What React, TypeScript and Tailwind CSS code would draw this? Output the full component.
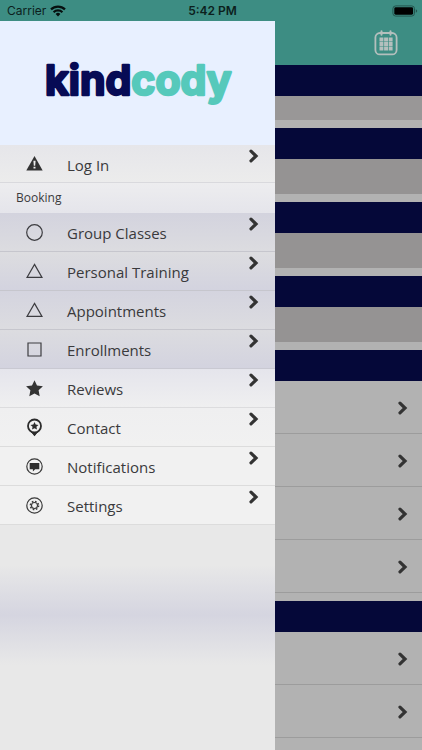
import type { ReactNode } from 'react';

interface MenuItem {
  label: string;
  icon: ReactNode;
  background: string;
}

const accountItems: MenuItem[] = [
  { label: 'Log In', icon: <WarningIcon />, background: 'bg-linear-to-b from-[#e6e6ea] to-[#ececec] h-[38px] border-[#d9d9dd]' },
];

const bookingItems: MenuItem[] = [
  { label: 'Group Classes', icon: <CircleIcon />, background: 'bg-linear-to-b from-[#d3d3de] to-[#dcdce0] h-[39px] border-[#c6c6cd]' },
  { label: 'Personal Training', icon: <TriangleIcon />, background: 'bg-linear-to-b from-[#dddde0] to-[#d3d3df] h-[39px] border-[#c6c6cd]' },
  { label: 'Appointments', icon: <TriangleIcon />, background: 'bg-linear-to-b from-[#d4d4df] to-[#dcdce0] h-[39px] border-[#c6c6cd]' },
  { label: 'Enrollments', icon: <SquareIcon />, background: 'bg-linear-to-b from-[#dcdce0] to-[#d3d3df] h-[39px] border-[#c9c9d2]' },
  { label: 'Reviews', icon: <StarIcon />, background: 'bg-linear-to-b from-[#e5e5ec] to-[#efeff0] h-[39px] border-[#dcdcde]' },
  { label: 'Contact', icon: <PinIcon />, background: 'bg-linear-to-b from-[#efeff0] to-[#f1f1f1] h-[39px] border-[#dcdcdc]' },
  { label: 'Notifications', icon: <MessageIcon />, background: 'bg-[#f1f1f1] h-[39px] border-[#dcdcdc]' },
  { label: 'Settings', icon: <GearIcon />, background: 'bg-[#f1f1f1] h-[39px] border-[#dcdcdc]' },
];

function WarningIcon() {
  return (
    <svg viewBox="0 0 17 17" className="size-[17px]">
      <path d="M8.5 1 16.7 15.5H.3Z" fill="#333" />
      <path d="M7.4 5.8h2.2l-.4 5H7.8zM7.5 11.8h2v1.8h-2z" fill="#eee" />
    </svg>
  );
}

function CircleIcon() {
  return (
    <svg viewBox="0 0 17 17" className="size-[17px]">
      <circle cx="8.5" cy="8.5" r="7.8" fill="none" stroke="#3c3c40" strokeWidth="1.2" />
    </svg>
  );
}

function TriangleIcon() {
  return (
    <svg viewBox="0 0 17 17" className="size-[17px]">
      <path d="M8.5 1.4 16 14.4H1Z" fill="none" stroke="#3c3c40" strokeWidth="1.2" />
    </svg>
  );
}

function SquareIcon() {
  return (
    <svg viewBox="0 0 17 17" className="size-[17px]">
      <path d="M2 2h13v13H2z" fill="none" stroke="#3c3c40" strokeWidth="1.2" />
    </svg>
  );
}

function StarIcon() {
  return (
    <svg viewBox="0 0 17 17" className="size-[17px]">
      <path d="m8.5.2 2.5 5.4 5.9.7-4.3 4 1.1 6-5.2-2.9-5.2 2.9 1.1-6-4.3-4 5.9-.7z" fill="#333" />
    </svg>
  );
}

function PinIcon() {
  return (
    <svg viewBox="0 0 17 19" className="h-[19px] w-[17px]">
      <path d="M8.5 18.2 5.3 14h6.4z" fill="#2c2c2c" />
      <circle cx="8.5" cy="8" r="6.5" fill="#f1f1f1" stroke="#2c2c2c" strokeWidth="1.8" />
      <path d="M4.4 13.2q4.1 2.4 8.2 0L8.5 18z" fill="#2c2c2c" />
      <path d="m8.5 4 1.2 2.6 2.8.3-2.1 1.9.6 2.8-2.5-1.4L6 11.6l.6-2.8-2.1-1.9 2.8-.3z" fill="#2c2c2c" />
    </svg>
  );
}

function MessageIcon() {
  return (
    <svg viewBox="0 0 17 17" className="size-[17px]">
      <circle cx="8.5" cy="8.5" r="7.7" fill="none" stroke="#3a3a3a" strokeWidth="1.2" />
      <path d="M3.7 4.9h9.6v6.3H9.2l-2.3 2.2v-2.2H3.7z" fill="#2c2c2c" />
    </svg>
  );
}

function GearIcon() {
  return (
    <svg viewBox="0 0 17 17" className="size-[17px]" fill="none" stroke="#3a3a3a">
      <circle cx="8.5" cy="8.5" r="7.7" strokeWidth="1.2" />
      <circle cx="8.5" cy="8.5" r="3" strokeWidth="1.1" />
      <circle cx="8.5" cy="8.5" r="4.1" strokeWidth="1.5" strokeDasharray="1.6 1.62" />
    </svg>
  );
}

function Chevron() {
  return (
    <svg viewBox="0 0 10 14" className="h-[14px] w-[10px]">
      <path d="m2 2.2 5 4.8-5 4.8" fill="none" stroke="#333" strokeWidth="3.2" strokeLinecap="round" />
    </svg>
  );
}

function StatusBar() {
  return (
    <header className="grid h-[21px] shrink-0 grid-cols-3 items-center bg-[#3d8d83] pr-1 pl-[7px] text-[#0c1f1d]">
      <div className="flex items-center gap-1">
        <span className="text-[12px] leading-4">Carrier</span>
        <svg viewBox="0 0 16 12" className="h-3 w-4">
          <g fill="none" stroke="#06100f" strokeWidth="2.2">
            <path d="M1 4.4a10 10 0 0 1 14 0" />
            <path d="M3.6 7.2a6.3 6.3 0 0 1 8.8 0" />
          </g>
          <path d="M8 11.4 5.6 9a3.4 3.4 0 0 1 4.8 0z" fill="#06100f" />
        </svg>
      </div>
      <span className="text-center text-[12px] leading-4 font-semibold">5:42 PM</span>
      <svg viewBox="0 0 26 12" className="h-3 w-[26px] justify-self-end">
        <rect x=".9" y=".9" width="21.6" height="10.2" rx="2.8" fill="none" stroke="#24564f" />
        <rect x="2.3" y="2.3" width="18.8" height="7.4" rx="1.4" fill="#000" />
        <path d="M23.8 4.2q1.4.6 1.4 1.8t-1.4 1.8z" fill="#24564f" />
      </svg>
    </header>
  );
}

function MenuRow({ item }: { item: MenuItem }) {
  return (
    <li className={`border-b ${item.background}`}>
      <a href="#" className="flex h-full items-center pr-4 pl-[26px]">
        <span className="flex w-[17px] justify-center">{item.icon}</span>
        <span className="ml-6 flex-1 pt-0.5 text-[15px] leading-5">{item.label}</span>
        <span className="self-start pt-1">
          <Chevron />
        </span>
      </a>
    </li>
  );
}

function Drawer() {
  return (
    <nav className="flex w-[275px] shrink-0 flex-col bg-[#e8e8e8] font-['Open_Sans',sans-serif] text-[#3a3a3c]">
      <div className="flex h-[124px] shrink-0 items-center justify-center bg-[#e8f0ff]">
        <svg viewBox="0 0 200 60" className="h-[60px] w-[200px]" role="img" aria-label="kindcody">
          <text
            x="7"
            y="42"
            fontSize="41"
            strokeWidth="2.4"
            strokeLinejoin="round"
            className="font-['Inter',sans-serif] font-bold"
          >
            <tspan fill="#070b55" stroke="#070b55">kind</tspan>
            <tspan fill="#56c9bb" stroke="#56c9bb">cody</tspan>
          </text>
        </svg>
      </div>
      <ul>
        {accountItems.map((item) => (
          <MenuRow key={item.label} item={item} />
        ))}
      </ul>
      <h2 className="bg-linear-to-b from-[#ededef] to-[#e5e5eb] py-[5px] pl-4 text-[12px] leading-5">
        Booking
      </h2>
      <ul>
        {bookingItems.map((item) => (
          <MenuRow key={item.label} item={item} />
        ))}
      </ul>
      {/* tint of the section bar showing through the drawer */}
      <div className="mt-10 h-[100px] bg-linear-to-b from-[#e8e8e8] via-[#d5d5e0] to-[#e8e8e8]" />
    </nav>
  );
}

function Section({ children }: { children: ReactNode }) {
  return (
    <section className="mb-2">
      <div className="h-[31px] bg-[#050839]" />
      {children}
    </section>
  );
}

function LinkRow() {
  return (
    <a href="#" aria-label="Open" className="flex h-[53px] items-center justify-end border-b border-[#9c9c9c] pt-px pr-[14px]">
      <Chevron />
    </a>
  );
}

function Schedule() {
  return (
    <main className="min-w-0 flex-1 bg-[#b2b2b2]">
      <div className="flex h-[44px] items-center justify-end bg-[#3d8d83] pr-6">
        <button type="button" aria-label="Calendar">
          <svg viewBox="0 0 24 26" className="h-[26px] w-6">
            <rect x="1.4" y="3" width="21.2" height="21.4" rx="4.5" fill="none" stroke="#b4bfbd" strokeWidth="1.8" />
            <path d="M7.5 1.2v3.6M16.5 1.2v3.6" stroke="#b4bfbd" strokeWidth="2" strokeLinecap="round" />
            <path
              d="M5.5 7.6h3.9v3.9H5.5zM10.1 7.6h3.9v3.9h-3.9zM14.7 7.6h3.9v3.9h-3.9zM5.5 12.1h3.9v3.9H5.5zM10.1 12.1h3.9v3.9h-3.9zM14.7 12.1h3.9v3.9h-3.9zM5.5 16.6h3.9v3.9H5.5zM10.1 16.6h3.9v3.9h-3.9zM14.7 16.6h3.9v3.9h-3.9z"
              fill="#b4bfbd"
            />
          </svg>
        </button>
      </div>
      <Section>
        <div className="h-6 bg-[#999797]" />
      </Section>
      <Section>
        <div className="h-[35px] bg-[#959393]" />
      </Section>
      <Section>
        <div className="h-[35px] bg-[#959393]" />
      </Section>
      <Section>
        <div className="h-[35px] bg-[#959393]" />
      </Section>
      <Section>
        <LinkRow />
        <LinkRow />
        <LinkRow />
        <LinkRow />
      </Section>
      <Section>
        <LinkRow />
        <LinkRow />
        <LinkRow />
      </Section>
    </main>
  );
}

export default function App() {
  return (
    <div className="flex h-screen flex-col overflow-hidden font-['Inter',sans-serif]">
      <StatusBar />
      <div className="flex min-h-0 flex-1 overflow-hidden">
        <Drawer />
        <Schedule />
      </div>
    </div>
  );
}
